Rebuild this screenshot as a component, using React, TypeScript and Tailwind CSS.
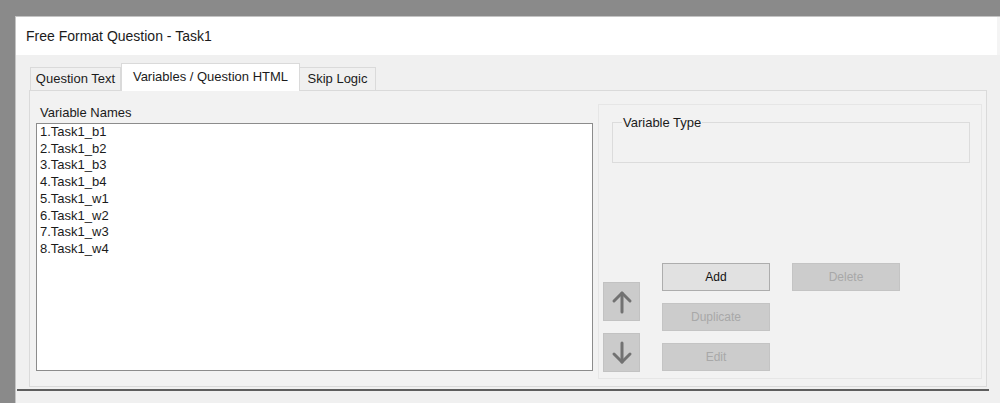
const variableNames = [
  '1.Task1_b1',
  '2.Task1_b2',
  '3.Task1_b3',
  '4.Task1_b4',
  '5.Task1_w1',
  '6.Task1_w2',
  '7.Task1_w3',
  '8.Task1_w4',
];

function ArrowButton({ dir }: { dir: 'up' | 'down' }) {
  return (
    <div className="w-[37px] h-[39px] bg-[#cbcbcb] border border-[#c2c2c2] flex items-center justify-center">
      <svg width="24" height="26" viewBox="0 0 24 26" fill="none" stroke="#727272" strokeWidth="3" strokeLinecap="round" strokeLinejoin="round">
        {dir === 'up' ? (
          <>
            <path d="M12 4 V23" />
            <path d="M4 12 L12 4 L20 12" />
          </>
        ) : (
          <>
            <path d="M12 3 V22" />
            <path d="M4 14 L12 22 L20 14" />
          </>
        )}
      </svg>
    </div>
  );
}

function WinButton({ label, disabled }: { label: string; disabled?: boolean }) {
  return (
    <div
      className={`w-[108px] h-[28px] flex items-center justify-center text-[12px] border ${
        disabled ? 'bg-[#cccccc] border-[#c4c4c4] text-[#a8a8a8]' : 'bg-[#e1e1e1] border-[#adadad] text-[#111]'
      }`}
    >
      {label}
    </div>
  );
}

export default function App() {
  return (
    <div className="w-[1000px] h-[403px] overflow-hidden bg-[#8a8a8a] flex pt-[16px] pl-[15px] font-['Liberation_Sans',Arial,sans-serif]">
      <div className="flex-1 flex flex-col bg-white border-l border-t border-[#c4c4c4]">
        {/* Title bar */}
        <div className="h-[38px] flex items-center px-[10px] text-[14px] text-[#1b1b1b] border-r-[3px] border-[#f4f4f4]">
          Free Format Question - Task1
        </div>

        {/* Body */}
        <div className="flex-1 flex flex-col bg-[#f0f0f0] pt-[8px] pr-[2px]">
          {/* Tabs */}
          <div className="flex items-end h-[27px] pl-[14px] text-[13px] text-[#1b1b1b]">
            <div className="w-[91px] h-[23px] flex items-center justify-center border border-b-0 border-[#dadada] bg-[#f0f0f0]">
              Question Text
            </div>
            <div className="relative z-10 -mb-px w-[179px] h-[28px] flex items-center justify-center border border-b-0 border-[#dadada] bg-white pb-[1px]">
              Variables / Question HTML
            </div>
            <div className="w-[76px] h-[23px] flex items-center justify-center border border-b-0 border-l-0 border-[#dadada] bg-[#f0f0f0]">
              Skip Logic
            </div>
          </div>

          {/* Tab panel */}
          <div className="ml-[13px] mr-[11px] h-[297px] border border-[#dadada] bg-[#f2f2f2] flex pl-[6px] pt-[12px] text-[13px] text-[#1b1b1b]">
            {/* Variable names */}
            <div className="flex flex-col">
              <div className="h-[20px] pl-[4px] pt-[2px] leading-[16px]">Variable Names</div>
              <div className="w-[557px] h-[248px] bg-white border border-[#8c8c8c] pl-[3px]">
                {variableNames.map((name) => (
                  <div key={name} className="leading-[16.7px]">
                    {name}
                  </div>
                ))}
              </div>
            </div>

            {/* Right side */}
            <div className="ml-[5px] mt-[1px] w-[384px] h-[275px] border border-[#e6e6e6] flex flex-col">
              <fieldset className="ml-[13px] mt-[10px] w-[358px] h-[48px] border border-[#dcdcdc]">
                <legend className="ml-[9px] px-[1px] leading-[15px]">Variable Type</legend>
              </fieldset>

              <div className="mt-[100px] pl-[4px] flex">
                <div className="flex flex-col gap-[12px] pt-[19px]">
                  <ArrowButton dir="up" />
                  <ArrowButton dir="down" />
                </div>
                <div className="ml-[22px] flex flex-col gap-[12px]">
                  <WinButton label="Add" />
                  <WinButton label="Duplicate" disabled />
                  <WinButton label="Edit" disabled />
                </div>
                <div className="ml-[22px]">
                  <WinButton label="Delete" disabled />
                </div>
              </div>
            </div>
          </div>

          {/* Splitter line */}
          <div className="mt-[2px] ml-[1px] mr-[9px] h-[2px] bg-[#5e5e5e]" />
        </div>
      </div>
    </div>
  );
}
